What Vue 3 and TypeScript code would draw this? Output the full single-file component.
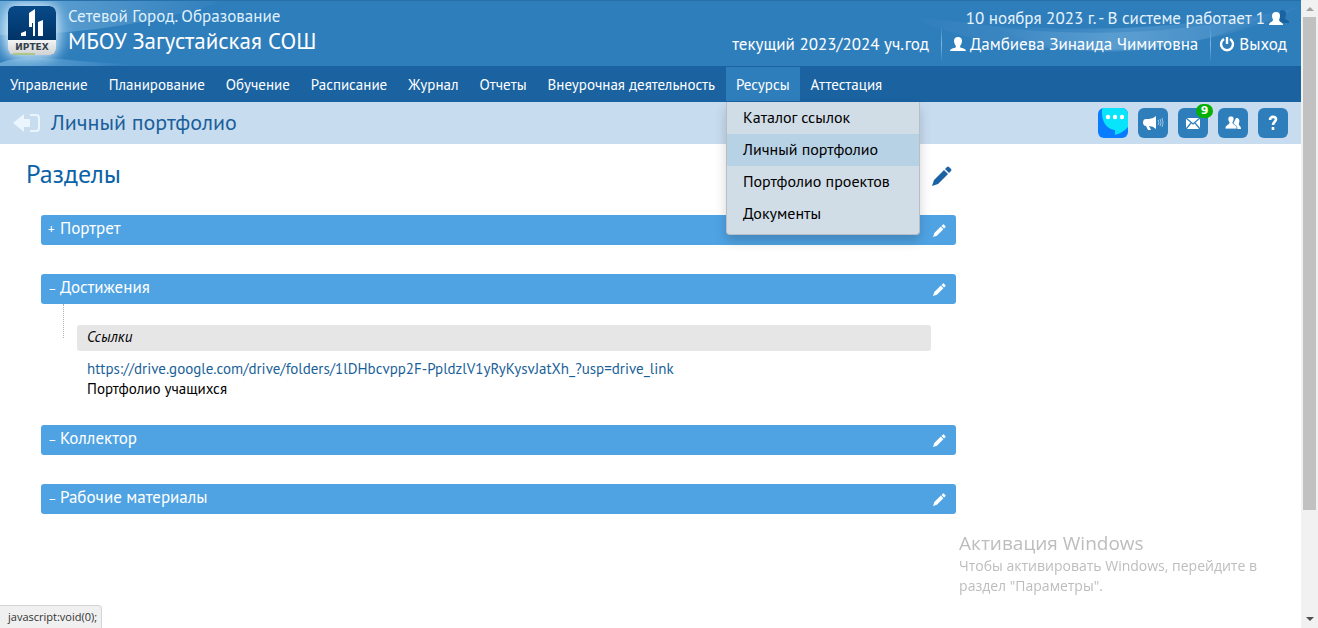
<script setup lang="ts">
import { ref } from 'vue'

const navItems: string[] = [
  'Управление', 'Планирование', 'Обучение', 'Расписание', 'Журнал',
  'Отчеты', 'Внеурочная деятельность', 'Ресурсы', 'Аттестация',
]
const resources: string[] = ['Каталог ссылок', 'Личный портфолио', 'Портфолио проектов', 'Документы']
const openMenu = ref('Ресурсы')
const activeResource = ref('Личный портфолио')

interface Section {
  title: string
  open: boolean
  group?: { name: string; url: string; note: string }
}
const sections = ref<Section[]>([
  { title: 'Портрет', open: false },
  {
    title: 'Достижения',
    open: true,
    group: {
      name: 'Ссылки',
      url: 'https://drive.google.com/drive/folders/1lDHbcvpp2F-PpldzlV1yRyKysvJatXh_?usp=drive_link',
      note: 'Портфолио учащихся',
    },
  },
  { title: 'Коллектор', open: true },
  { title: 'Рабочие материалы', open: true },
])
</script>

<template>
  <div class="shell">
    <div class="page">
      <header class="top">
        <svg class="glow" viewBox="0 0 330 66" aria-hidden="true">
          <defs>
            <radialGradient id="halo"><stop offset="0.4" stop-color="#b8dcf3" stop-opacity="0.9" /><stop offset="1" stop-color="#5fa6da" stop-opacity="0" /></radialGradient>
            <linearGradient id="fade"><stop offset="0" stop-color="#8cc2e8" stop-opacity="0.6" /><stop offset="1" stop-color="#8cc2e8" stop-opacity="0" /></linearGradient>
          </defs>
          <path d="M0 34C70 34 150 24 225 0H0Z" fill="url(#fade)" />
          <path d="M0 62C30 50 70 62 132 63C80 67 30 66 0 66Z" fill="url(#fade)" />
          <ellipse cx="30" cy="30" rx="46" ry="42" fill="url(#halo)" />
        </svg>
        <svg class="swoosh" viewBox="0 0 400 66" aria-hidden="true">
          <defs>
            <linearGradient id="arc"><stop offset="0" stop-color="#7db7e2" stop-opacity="0" /><stop offset="0.5" stop-color="#8cc2e8" stop-opacity="0.28" /><stop offset="1" stop-color="#7db7e2" stop-opacity="0.05" /></linearGradient>
          </defs>
          <path d="M10 16C90 56 280 68 400 5C300 32 180 40 70 22C50 20 30 18 10 16Z" fill="url(#arc)" />
          <path d="M90 22C150 66 290 56 370 12C280 26 170 34 90 22Z" fill="url(#arc)" />
        </svg>
        <div class="brand">
          <svg class="logo" viewBox="0 0 48 49" role="img" aria-label="ИРТЕХ">
            <defs>
              <linearGradient id="navy" x2="0" y2="1"><stop offset="0" stop-color="#084a89" /><stop offset="1" stop-color="#003467" /></linearGradient>
              <linearGradient id="plate" x2="0" y2="1"><stop offset="0.6" stop-color="#ffffff" /><stop offset="1" stop-color="#cfd1d2" /></linearGradient>
            </defs>
            <rect width="48" height="49" rx="6" fill="url(#plate)" />
            <path d="M0 34V6a6 6 0 0 1 6-6h36a6 6 0 0 1 6 6v28Z" fill="url(#navy)" />
            <path d="M13 27l5-2v5h-5ZM21 7l6-4v27h-2V17h-1v4h-3ZM30 16l5-2v16h-5Z" fill="#fff" />
            <path d="M5 48h22" stroke="#8cb936" />
            <text x="24" y="44" text-anchor="middle" class="logo-text">ИРТЕХ</text>
          </svg>
          <div class="brand-text">
            <span class="product">Сетевой Город. Образование</span>
            <span class="school">МБОУ Загустайская СОШ</span>
          </div>
        </div>
        <div class="account">
          <div class="line">
            <span>10 ноября 2023 г. - В системе работает 1</span>
            <svg class="duo" viewBox="0 0 20 16" aria-hidden="true">
              <path d="M13 0c3 0 4 2 4 4 0 2-1 3-1 5l4 2v2h-9V1Z" fill="#1a62a0" />
              <path d="M7 2c3 0 4 2 4 4 0 2-1 3-1 4 0 2 4 2 4 5H0c0-3 4-3 4-5 0-1-1-2-1-4 0-2 1-4 4-4Z" fill="#fff" />
            </svg>
          </div>
          <div class="line second">
            <span>текущий 2023/2024 уч.год</span>
            <i class="divider"></i>
            <a href="#profile" class="user">
              <svg class="glyph" viewBox="0 0 16 16" aria-hidden="true"><path d="M8 1c3 0 4 2 4 4 0 3-2 4-2 6 0 1 6 1 6 4H0c0-3 6-3 6-4 0-2-2-3-2-6 0-2 1-4 4-4Z" fill="#fff" /></svg>Дамбиева Зинаида Чимитовна</a>
            <i class="divider"></i>
            <a href="#exit" class="exit">
              <svg class="glyph" viewBox="0 0 16 16" aria-hidden="true"><path d="M5 3a6 6 0 1 0 6 0M8 1v7" fill="none" stroke="#fff" stroke-width="2.4" /></svg>Выход</a>
          </div>
        </div>
      </header>

      <nav class="nav">
        <div v-for="item in navItems" :key="item" class="nav-cell">
          <button type="button" class="nav-item" :class="{ open: openMenu === item }" @click="openMenu = item">{{ item }}</button>
          <div v-if="item === 'Ресурсы' && openMenu === item" class="menu">
            <a v-for="r in resources" :key="r" href="#" :class="{ active: r === activeResource }" @click.prevent="activeResource = r">{{ r }}</a>
          </div>
        </div>
      </nav>

      <div class="titlebar">
        <button type="button" class="back" aria-label="Назад">
          <svg viewBox="0 0 28 20" aria-hidden="true"><path d="M0 10L11 1v5h6v8h-6v5Z" fill="#eaf5fe" /><path d="M17 2h6q3 0 3 3v10q0 3-3 3h-6" fill="none" stroke="#eaf5fe" stroke-width="2" /></svg>
        </button>
        <h1>Личный портфолио</h1>
        <div class="tools">
          <button type="button" class="tool chat" aria-label="Чат">
            <svg viewBox="0 0 30 30" aria-hidden="true"><path d="M4 0h21a5 5 0 0 1 5 5v14q-4 5-13 8v-5C9 21 3 15 4 0Z" fill="#08e5fb" /><g fill="#fff"><circle cx="10" cy="9" r="2.2" /><circle cx="17" cy="9" r="2.2" /><circle cx="24" cy="9" r="2.2" /></g></svg>
          </button>
          <button type="button" class="tool" aria-label="Объявления">
            <svg viewBox="0 0 30 30" aria-hidden="true"><path d="M18 8v13q-3-3-7-3l2 4h-3l-2-4c-4 0-4-7 0-7h3q4 0 7-3Z" fill="#fff" /><path d="M20 12q2 3 0 5M22 11q2 4 0 7M24 10q2 5 0 9" fill="none" stroke="#b9d7ee" stroke-width="0.8" /></svg>
          </button>
          <button type="button" class="tool" aria-label="Почта">
            <svg viewBox="0 0 30 30" aria-hidden="true"><path d="M8 10h14v11H8Z" fill="#fff" /><path d="M8 10l7 6 7-6M8 21l5-6M22 21l-5-6" fill="none" stroke="#2f7ebc" stroke-width="1.2" /></svg>
            <span class="badge">9</span>
          </button>
          <button type="button" class="tool" aria-label="Пользователи">
            <svg viewBox="0 0 30 30" aria-hidden="true"><path d="M18 10c3 0 4 2 3 5-1 3 2 2 2 6h-5l-3-5Z" fill="#fff" /><path d="M13 8c3 0 4 3 2 6-1 3 4 2 4 7H7c0-5 5-4 4-7-2-3-1-6 2-6Z" fill="#fff" stroke="#2f7ebc" stroke-width="0.8" /></svg>
          </button>
          <button type="button" class="tool" aria-label="Справка">
            <svg viewBox="0 0 30 30" aria-hidden="true"><path d="M12 12c0-4 6-4 6-1 0 3-3 3-3 6M15 19v3" fill="none" stroke="#fff" stroke-width="2.6" /></svg>
          </button>
        </div>
      </div>

      <main class="content">
        <div class="heading">
          <h2>Разделы</h2>
          <button type="button" class="edit-all" aria-label="Редактировать разделы">
            <svg viewBox="0 0 20 20" aria-hidden="true"><path d="M0 20l2-6L12 4l4 4L6 18ZM13 3l2-2q1-1 2 0l2 2q1 1 0 2l-2 2Z" fill="#1a62a4" /></svg>
          </button>
        </div>
        <section v-for="s in sections" :key="s.title" class="section">
          <div class="bar">
            <button type="button" class="toggle" :aria-expanded="s.open" @click="s.open = !s.open"><span class="sign">{{ s.open ? '–' : '+' }}</span>{{ s.title }}</button>
            <button type="button" class="edit" :aria-label="'Редактировать: ' + s.title">
              <svg viewBox="0 0 20 20" aria-hidden="true"><path d="M0 20l2-6L12 4l4 4L6 18ZM13 3l2-2q1-1 2 0l2 2q1 1 0 2l-2 2Z" fill="#fff" /></svg>
            </button>
          </div>
          <div v-if="s.open && s.group" class="group">
            <h3>{{ s.group.name }}</h3>
            <a :href="s.group.url">{{ s.group.url }}</a>
            <p>{{ s.group.note }}</p>
          </div>
        </section>
      </main>
    </div>

    <div class="scroll">
      <svg viewBox="0 0 17 17" aria-hidden="true"><path d="M5 11l4-4 4 4Z" fill="#a3a3a3" /></svg>
      <div class="track"><div class="thumb"></div></div>
      <svg viewBox="0 0 17 17" aria-hidden="true"><path d="M5 6h8l-4 4Z" fill="#505050" /></svg>
    </div>

    <aside class="watermark">
      <strong>Активация Windows</strong>
      <p>Чтобы активировать Windows, перейдите в<br />раздел "Параметры".</p>
    </aside>
    <div class="status">javascript:void(0);</div>
  </div>
</template>

<style>
body { margin: 0; background: #fff; }
</style>

<style scoped>
.shell { display: flex; min-height: 100vh; font-family: "PT Sans", "Noto Sans", sans-serif; color: #000; }
.shell *, .shell { box-sizing: border-box; }
button { padding: 0; border: 0; background: none; font: inherit; color: inherit; cursor: pointer; }
a { color: inherit; text-decoration: none; }
svg { display: block; flex: none; }
h1, h2, h3, p { margin: 0; font-weight: 400; }
.page { flex: 1; min-width: 0; }

.top { position: relative; display: flex; justify-content: space-between; height: 66px; padding: 0 12px 0 8px; background: #2f7ebc; border-top: 1px solid #276fa8; color: #fff; overflow: hidden; white-space: nowrap; }
.glow { position: absolute; left: 0; top: 0; width: 330px; height: 66px; }
.swoosh { position: absolute; right: 0; top: 0; width: 400px; height: 66px; }
.brand, .account { position: relative; display: flex; }
.brand { gap: 12px; padding-top: 5px; }
.logo { width: 48px; height: 49px; border-radius: 6px; box-shadow: 0 0 12px rgba(235, 247, 255, 0.8); }
.logo-text { font: 700 9px "DejaVu Sans", sans-serif; fill: #34404c; }
.brand-text { display: flex; flex-direction: column; }
.product { font-size: 17px; line-height: 20px; color: #dff0fb; }
.school { font-size: 23px; line-height: 30px; }
.account { flex-direction: column; align-items: flex-end; padding-top: 4px; font-size: 17px; }
.line { display: flex; align-items: center; height: 26px; color: #e6f3fc; }
.duo { width: 20px; height: 16px; margin-left: 4px; }
.second { padding-right: 2px; color: #fff; }
.divider { width: 1px; height: 36px; margin: 0 8px 0 12px; background: linear-gradient(transparent, #7db7e2, transparent); }
.user, .exit { display: flex; align-items: center; gap: 4px; }
.glyph { width: 16px; height: 16px; }

.nav { display: flex; gap: 1px; height: 36px; background: #1a62a0; color: #fff; }
.nav-cell { position: relative; }
.nav-item { height: 34px; padding: 0 10px; margin-top: 1px; font-size: 15px; white-space: nowrap; }
.nav-item.open { background: #2f7ebc; }
.menu { position: absolute; z-index: 5; left: 0; top: 36px; width: 194px; padding-bottom: 4px; border: 1px solid #b7bec4; border-top: 0; border-radius: 0 0 4px 4px; background: #d1dde6; color: #000; box-shadow: 0 6px 12px rgba(0, 0, 0, 0.18); }
.menu a { display: block; height: 32px; padding-left: 16px; font-size: 16px; line-height: 30px; white-space: nowrap; }
.menu a.active { background: #b7d1e5; }

.titlebar { display: flex; align-items: center; height: 42px; padding: 0 13px; background: #c8dcf0; color: #1a5f99; }
.back svg { width: 28px; height: 20px; }
.titlebar h1 { flex: 1; margin-left: 10px; padding-bottom: 2px; font-size: 22px; line-height: 26px; }
.tools { display: flex; gap: 10px; }
.tool { position: relative; width: 30px; height: 30px; border-radius: 6px; background: #2f7ebc; }
.tool svg { width: 30px; height: 30px; }
.chat { background: #087bff; overflow: hidden; }
.badge { position: absolute; left: 18px; top: -4px; width: 17px; height: 14px; border-radius: 7px; background: #05af05; color: #fff; font: 700 11px/14px "DejaVu Sans", sans-serif; text-align: center; }

.content { margin-right: 345px; padding: 14px 0 40px 26px; }
.heading { display: flex; align-items: center; justify-content: space-between; height: 36px; margin-bottom: 21px; padding-right: 4px; }
.heading h2 { padding-bottom: 4px; font-size: 26px; line-height: 32px; color: #0c62a6; }
.edit-all svg { width: 20px; height: 20px; }
.section { margin: 0 0 29px 15px; }
.bar { display: flex; align-items: center; justify-content: space-between; height: 30px; padding: 0 10px 0 7px; border-radius: 3px; background: #4fa3e3; color: #fff; }
.toggle { display: flex; align-items: center; height: 26px; align-self: flex-start; font-size: 17px; }
.sign { width: 12px; padding-top: 3px; font-size: 13px; text-align: left; }
.edit svg { width: 13px; height: 13px; }
.group { position: relative; margin-bottom: -3px; padding: 21px 25px 0 36px; font-size: 15px; line-height: 20px; }
.group::before { content: ""; position: absolute; left: 22px; top: 0; height: 34px; border-left: 1px dotted #b0b0b0; }
.group h3 { height: 26px; margin-bottom: 8px; padding-left: 10px; border-radius: 3px; background: #e6e6e6; font-size: 15px; font-style: italic; line-height: 24px; }
.group a, .group p { display: block; padding-left: 10px; }
.group a { color: #1a5f99; }

.scroll { display: flex; flex-direction: column; width: 17px; background: #f1f1f1; }
.scroll svg { width: 17px; height: 17px; }
.track { flex: 1; padding: 0 2px; }
.thumb { height: 83%; background: #c1c1c1; }
.watermark { position: fixed; right: 57px; bottom: 32px; padding-right: 4px; color: #bdbdbd; font-family: "Open Sans", sans-serif; font-size: 14px; line-height: 20px; }
.watermark strong { display: block; font-size: 19px; font-weight: 400; line-height: 26px; }
.status { position: fixed; left: 0; bottom: 0; height: 23px; padding: 0 4px 0 8px; border: 1px solid #d5d5d5; border-left: 0; border-bottom: 0; border-radius: 0 4px 0 0; background: #f0f0f0; color: #333; font: 11px/22px "Open Sans", sans-serif; }
</style>
